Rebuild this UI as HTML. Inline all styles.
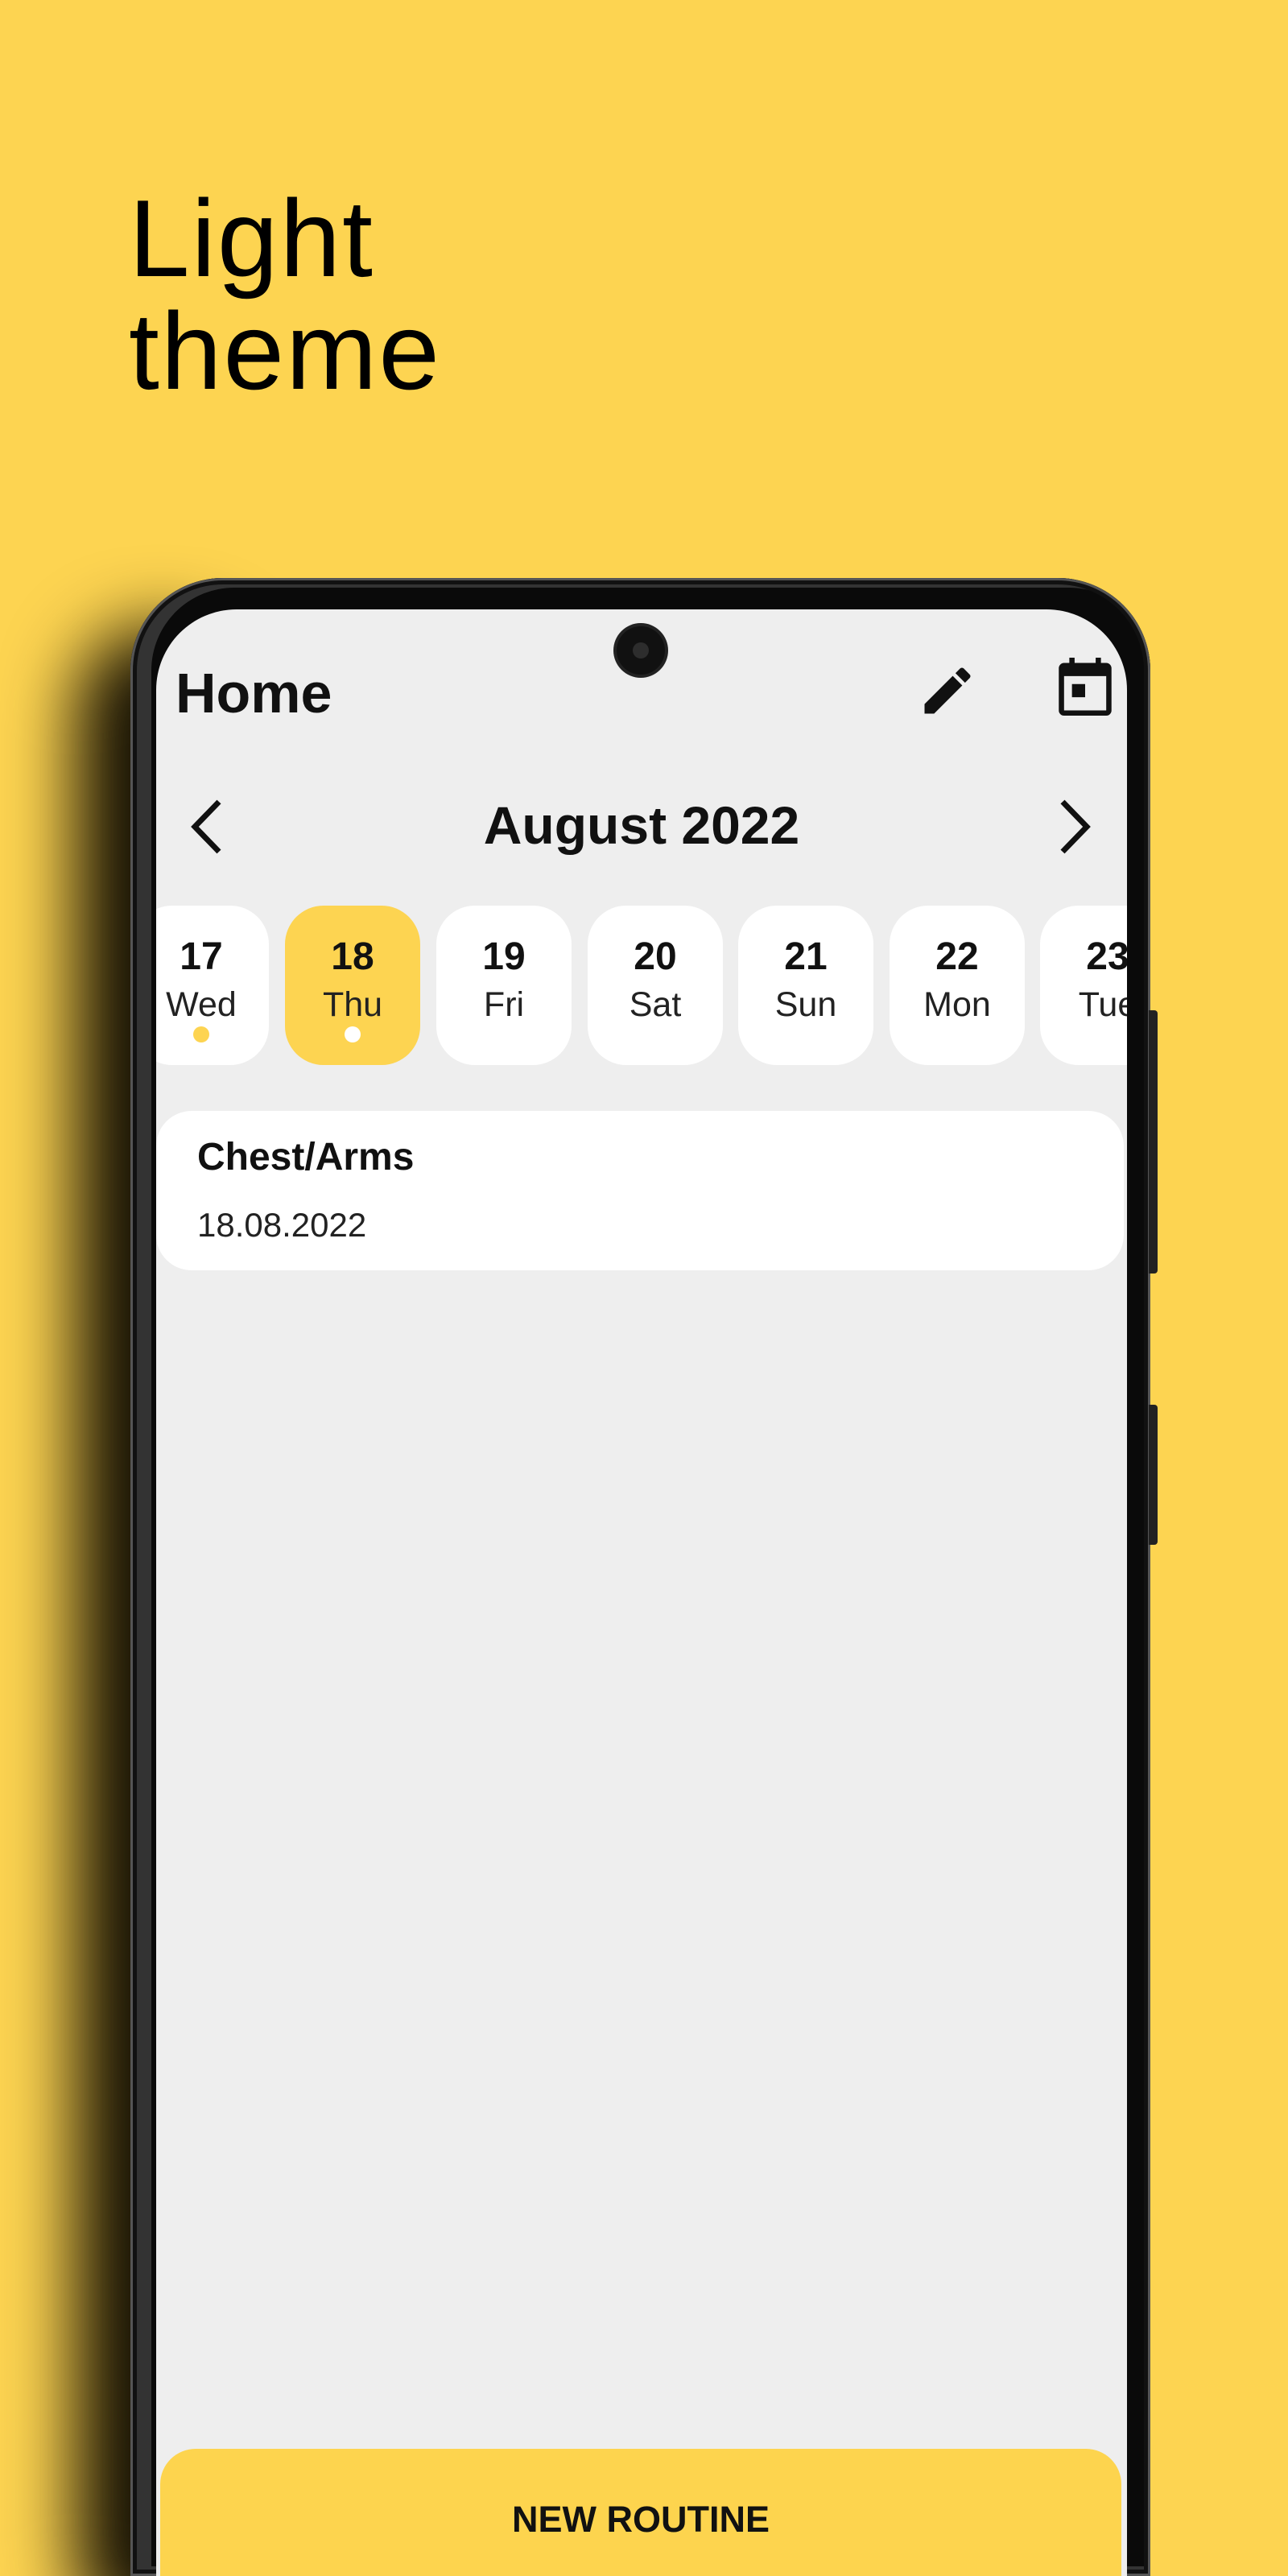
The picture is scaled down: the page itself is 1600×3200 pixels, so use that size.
<!DOCTYPE html>
<html><head><meta charset="utf-8"><style>
*{margin:0;padding:0;box-sizing:border-box}
html{width:1600px;height:3200px;overflow:hidden}
body{width:1600px;height:3200px;background:#fdd451;position:relative;overflow:hidden;font-family:"Liberation Sans",Roboto,sans-serif}
.title{position:absolute;left:160px;top:226px;font-size:136px;line-height:140px;color:#000;letter-spacing:2px}
.shadow{position:absolute;left:95px;top:780px;width:210px;height:2500px;background:#151003;filter:blur(45px);border-radius:100px}
.phone{position:absolute;left:162px;top:718px;width:1267px;height:2482px;background:#0a0a0a;border-radius:115px 115px 0 0;box-shadow:inset 0 0 0 3px #555,inset 0 0 0 8px #111,inset 14px 0 0 12px #333}
.btnside{position:absolute;left:1427px;width:11px;background:#222;border-radius:0 4px 4px 0}
.screen{position:absolute;left:194px;top:757px;width:1206px;height:2443px;background:#eeeeee;border-radius:100px 100px 0 0;overflow:hidden}
.cam{position:absolute;left:766px;top:778px;width:60px;height:60px;border-radius:50%;background:#111;box-shadow:0 0 0 4px #222}
.cam:after{content:"";position:absolute;left:20px;top:20px;width:20px;height:20px;border-radius:50%;background:#2d2d2d}
.abs{position:absolute}
.home{left:24px;top:64px;font-size:70px;font-weight:bold;color:#111}
.month{left:0;width:1206px;text-align:center;top:230px;font-size:66px;font-weight:bold;color:#111}
.day{position:absolute;top:368px;width:168px;height:198px;background:#fff;border-radius:48px;text-align:center;color:#111}
.day.sel{background:#fdd451}
.day .n{font-size:48px;font-weight:bold;margin-top:36px;line-height:56px}
.day .w{font-size:43px;line-height:50px;margin-top:6px;color:#222}
.dot{position:absolute;left:74px;top:150px;width:20px;height:20px;border-radius:50%}
.card{left:0;top:623px;width:1202px;height:198px;background:#fff;border-radius:44px}
.card .t{position:absolute;left:51px;top:30px;font-size:48px;font-weight:bold;color:#111}
.card .d{position:absolute;left:51px;top:118px;font-size:42px;color:#222}
.btn{left:5px;top:2285px;width:1194px;height:300px;background:#fdd44e;border-radius:44px;text-align:center;font-size:45px;font-weight:bold;color:#111;padding-top:62px}
</style></head><body>
<div class="title">Light<br>theme</div>
<div class="shadow"></div>
<div class="phone"></div>
<div class="btnside" style="top:1255px;height:327px"></div>
<div class="btnside" style="top:1745px;height:174px"></div>
<div class="screen">
  <div class="abs home">Home</div>
  <svg class="abs" style="left:945px;top:63px" width="76" height="76" viewBox="0 0 24 24"><path fill="#111" d="M3 17.25V21h3.75L17.81 9.94l-3.75-3.75L3 17.25zM20.71 7.04a1 1 0 0 0 0-1.41l-2.34-2.34a1 1 0 0 0-1.41 0l-1.83 1.83 3.75 3.75 1.83-1.83z"/></svg>
  <svg class="abs" style="left:1118px;top:60px" width="72" height="72" viewBox="0 0 20 22"><path fill="#111" d="M4 0h2v2h8V0h2v2h2a2 2 0 0 1 2 2v16a2 2 0 0 1-2 2H2a2 2 0 0 1-2-2V4a2 2 0 0 1 2-2h2zM2 7v13h16V7zM5 10h5v5H5z"/></svg>
  <svg class="abs" style="left:40px;top:235px" width="46" height="70" viewBox="0 0 46 70"><path d="M38 4 L8 35 L38 66" fill="none" stroke="#111" stroke-width="7"/></svg>
  <svg class="abs" style="left:1118px;top:235px" width="46" height="70" viewBox="0 0 46 70"><path d="M8 4 L38 35 L8 66" fill="none" stroke="#111" stroke-width="7"/></svg>
  <div class="abs month">August 2022</div>
  <div class="day" style="left:-28px"><div class="n">17</div><div class="w">Wed</div><div class="dot" style="background:#fdd451"></div></div>
  <div class="day sel" style="left:160px"><div class="n">18</div><div class="w">Thu</div><div class="dot" style="background:#fff"></div></div>
  <div class="day" style="left:348px"><div class="n">19</div><div class="w">Fri</div></div>
  <div class="day" style="left:536px"><div class="n">20</div><div class="w">Sat</div></div>
  <div class="day" style="left:723px"><div class="n">21</div><div class="w">Sun</div></div>
  <div class="day" style="left:911px"><div class="n">22</div><div class="w">Mon</div></div>
  <div class="day" style="left:1098px"><div class="n">23</div><div class="w">Tue</div></div>
  <div class="abs card"><div class="t">Chest/Arms</div><div class="d">18.08.2022</div></div>
  <div class="abs btn">NEW ROUTINE</div>
</div>
<div class="cam"></div>
</body></html>
